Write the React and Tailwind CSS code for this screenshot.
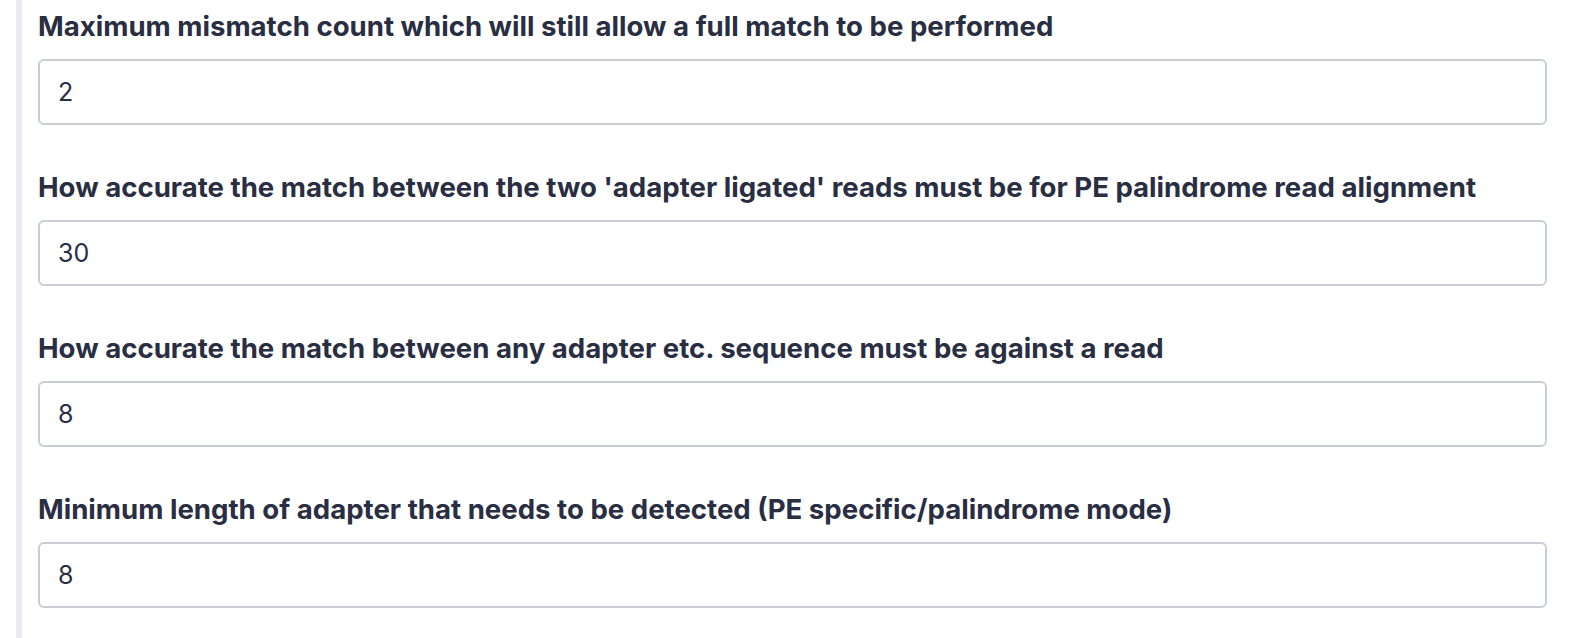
const fields = [
  { label: 'Maximum mismatch count which will still allow a full match to be performed', value: '2' },
  { label: "How accurate the match between the two 'adapter ligated' reads must be for PE palindrome read alignment", value: '30' },
  { label: 'How accurate the match between any adapter etc. sequence must be against a read', value: '8' },
  { label: 'Minimum length of adapter that needs to be detected (PE specific/palindrome mode)', value: '8' },
];

export default function App() {
  return (
    <div className="w-full h-[638px] bg-white overflow-hidden" style={{ fontFamily: 'Inter, "Noto Sans", sans-serif' }}>
      <div className="ml-4 h-full border-l-[6px] border-[#eaecf1] pl-4 pr-[37px] pt-2">
        {fields.map((f, i) => (
          <div key={i} className="mb-[44px]">
            <label className="block pt-[2px] text-[27.6px] leading-[33px] font-bold text-[#2a2e42] mb-[16px] whitespace-nowrap">{f.label}</label>
            <input
              type="text"
              defaultValue={f.value}
              className="w-full h-[66px] rounded-md border-2 border-[#c9cdd6] px-[18px] text-[25px] text-[#2a2e42] bg-white outline-none"
            />
          </div>
        ))}
      </div>
    </div>
  );
}
